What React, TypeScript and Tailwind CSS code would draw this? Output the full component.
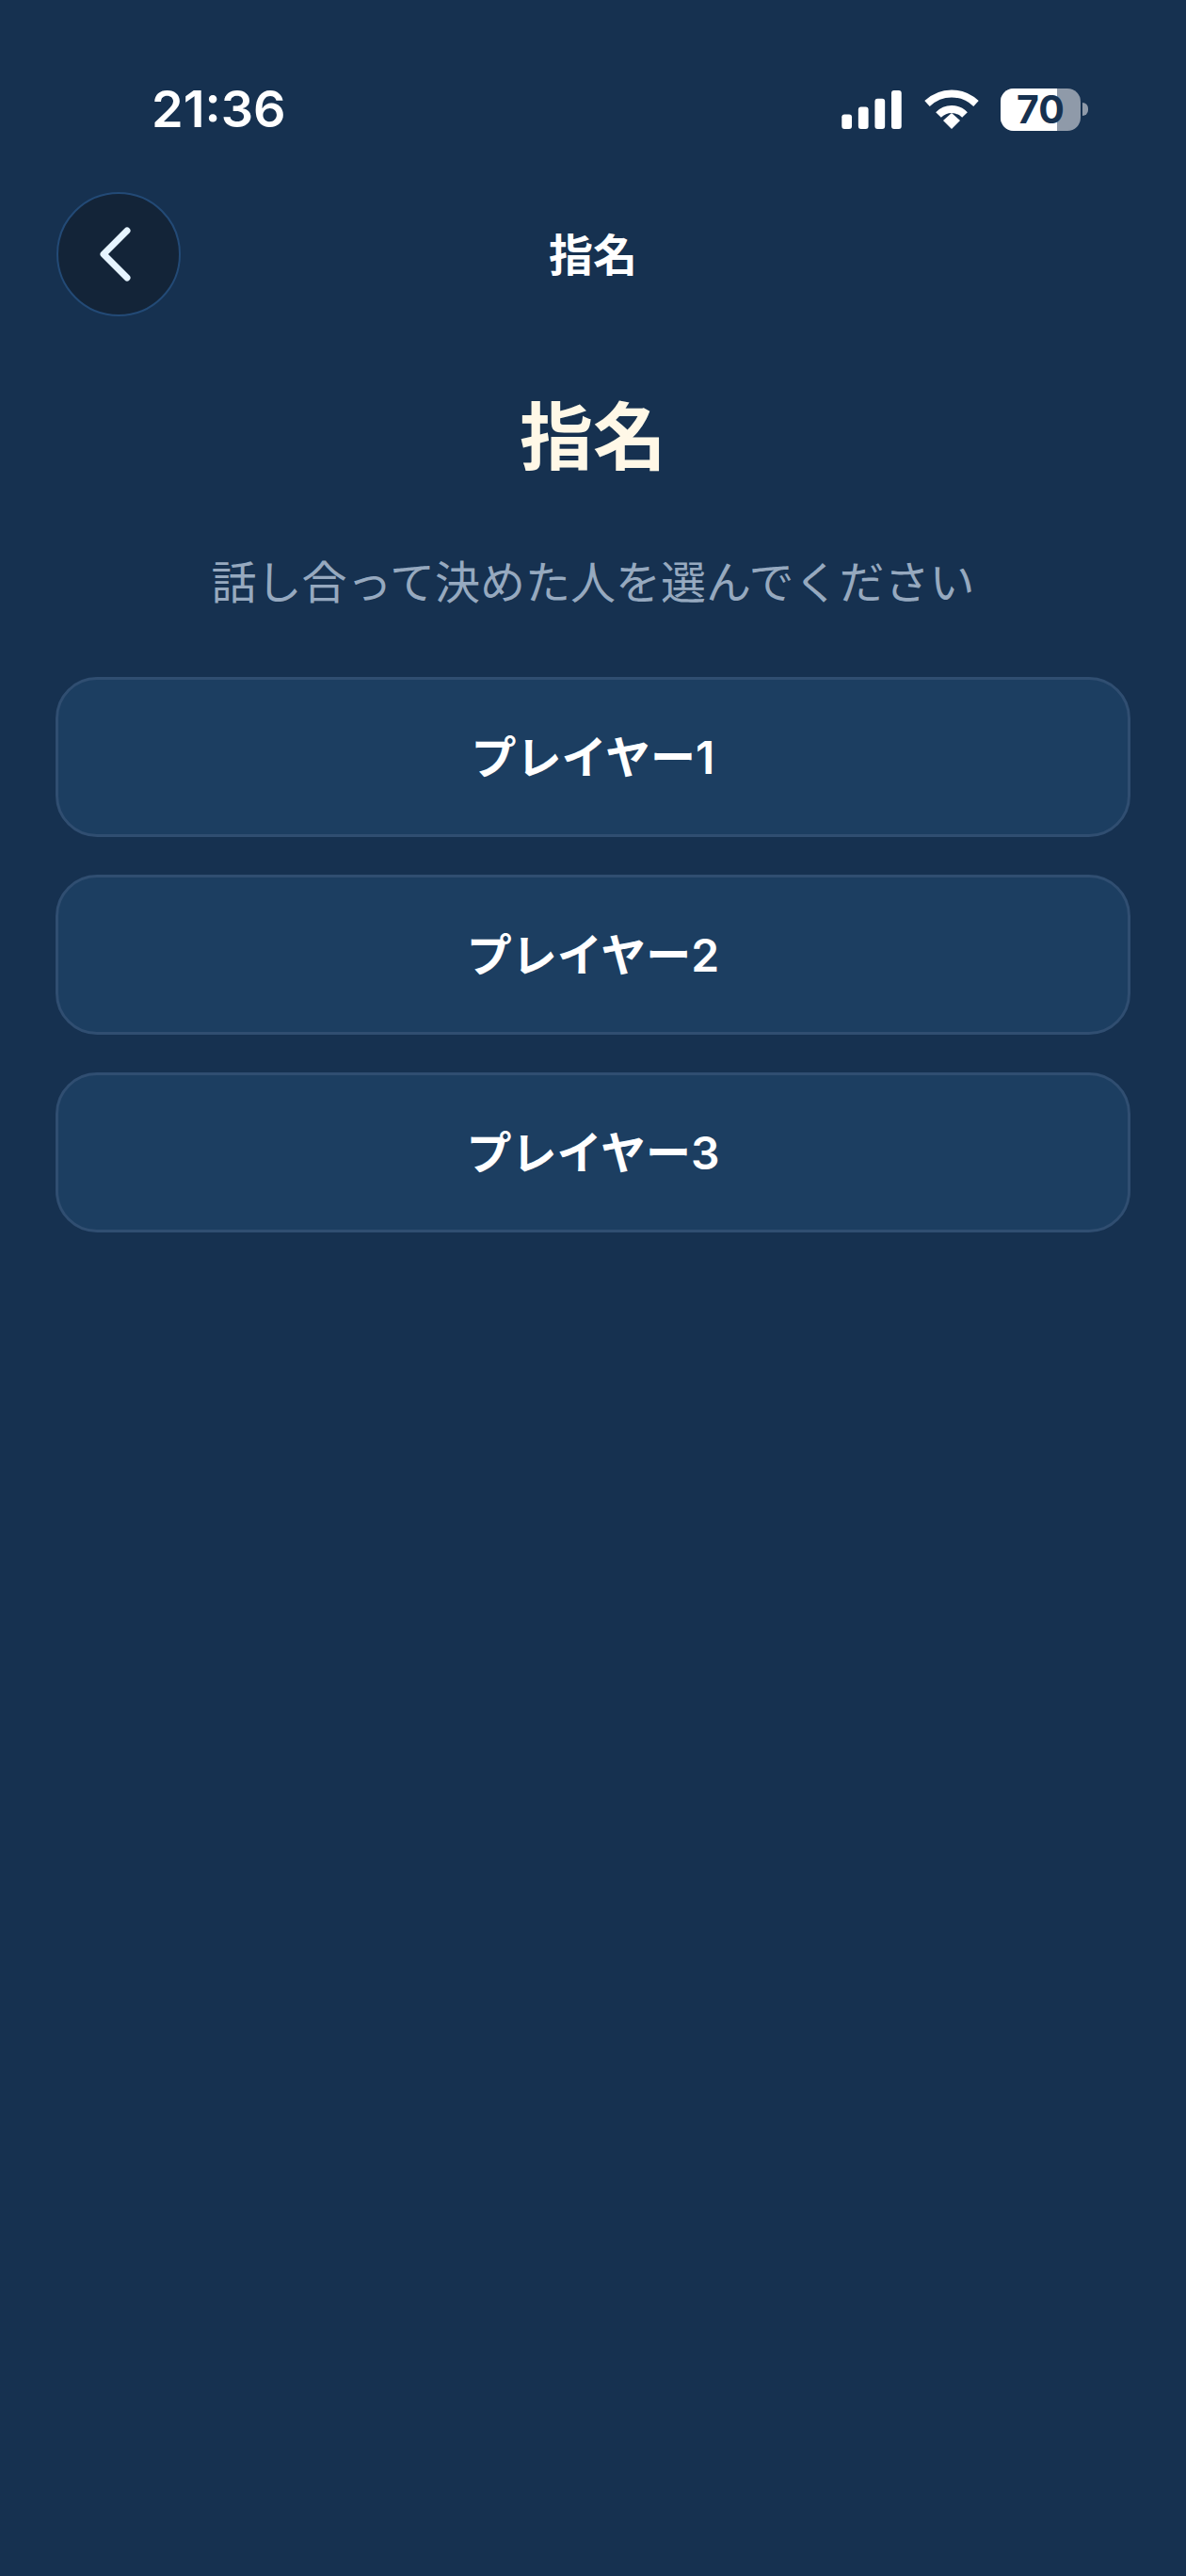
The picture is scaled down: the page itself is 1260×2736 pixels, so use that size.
const font = "font-['Inter','Noto_Sans_CJK_JP',sans-serif]";

function StatusBar() {
  return (
    <div className="flex h-[70px] items-center justify-between pl-[161px] pr-[104px]">
      <span className="text-[54px] leading-none font-semibold text-white">21:36</span>
      <div className="flex items-center gap-[23px]">
        <svg width="65" height="41" viewBox="0 0 66 42" fill="#fff">
          <rect x="0" y="26" width="11" height="16" rx="3" />
          <rect x="18" y="18" width="11" height="24" rx="3" />
          <rect x="36" y="9" width="11" height="33" rx="3" />
          <rect x="54" y="0" width="11" height="42" rx="3" />
        </svg>
        <svg width="58" height="42" viewBox="0 0 58 42" fill="none" stroke="#fff" strokeWidth="8">
          <path d="M3 15C18 1 40 1 55 15" />
          <path d="M15 27C23 19 35 19 43 27" />
          <path d="M20 33L29 25L38 33L29 42Z" fill="#fff" stroke="none" />
        </svg>
        <div className="flex items-center gap-[2px]">
          <div className="relative h-[45px] w-[85px] rounded-[14px] bg-[#8f9aa9]">
            <div className="h-full w-[60px] rounded-l-[14px] bg-white" />
            <span className="absolute inset-0 flex items-center justify-center text-[41px] leading-[45px] font-bold text-[#163150]">70</span>
          </div>
          <div className="h-[14px] w-[6px] rounded-r-full bg-[#8f9aa9]" />
        </div>
      </div>
    </div>
  );
}

function NavBar() {
  return (
    <div className="relative mt-[53px] flex h-[132px] items-center justify-center">
      <button className="absolute left-[60px] top-0 flex h-[132px] w-[132px] items-center justify-center rounded-full border-2 border-[#234a76] bg-[#132438]">
        <svg width="36" height="60" viewBox="0 0 36 60" fill="none" stroke="#e6f4ff" strokeWidth="7" strokeLinecap="round" strokeLinejoin="round" className="mr-[6px]">
          <path d="M30 5L5 30L30 55" />
        </svg>
      </button>
      <span className="text-[47px] leading-none font-semibold text-white">指名</span>
    </div>
  );
}

function PlayerButton({ name }: { name: string }) {
  return (
    <button className="flex h-[170px] w-full items-center justify-center rounded-[44px] border-[3px] border-[#304e71] bg-[#1c3e61] pt-[2px] text-[48px] font-semibold text-white">
      {name}
    </button>
  );
}

export default function App() {
  return (
    <div className={`${font} h-[2736px] w-full bg-[#163150] pt-[81px]`}>
      <StatusBar />
      <NavBar />
      <h1 className="mt-[73px] text-center text-[78px] leading-[112px] font-bold text-[#fff8e7]">指名</h1>
      <p className="mt-[66px] text-center text-[48px] leading-[64px] text-[#96a9bf]">話し合って決めた人を選んでください</p>
      <div className="mt-[68px] flex flex-col gap-[40px] px-[59px]">
        <PlayerButton name="プレイヤー1" />
        <PlayerButton name="プレイヤー2" />
        <PlayerButton name="プレイヤー3" />
      </div>
    </div>
  );
}
